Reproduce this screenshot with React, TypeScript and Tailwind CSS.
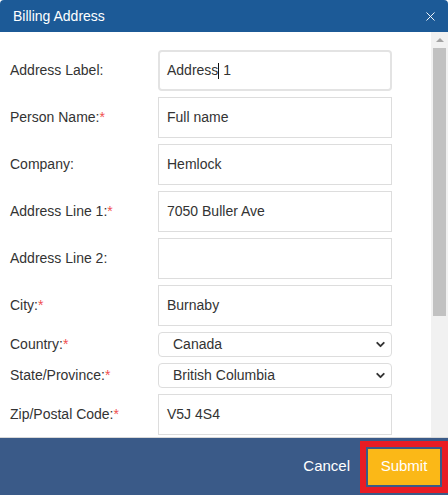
import { ChevronDown, X } from "lucide-react";

type Field = {
  label: string;
  value?: string;
  required?: boolean;
  kind?: "text" | "select" | "focus";
};

const fields: Field[] = [
  { label: "Address Label:", value: "Address 1", kind: "focus" },
  { label: "Person Name:", value: "Full name", required: true },
  { label: "Company:", value: "Hemlock" },
  { label: "Address Line 1:", value: "7050 Buller Ave", required: true },
  { label: "Address Line 2:", value: "" },
  { label: "City:", value: "Burnaby", required: true },
  { label: "Country:", value: "Canada", required: true, kind: "select" },
  { label: "State/Province:", value: "British Columbia", required: true, kind: "select" },
  { label: "Zip/Postal Code:", value: "V5J 4S4", required: true },
];

function Control({ f }: { f: Field }) {
  if (f.kind === "select") {
    return (
      <div className="w-[234px] h-[25px] border border-[#ddd] rounded-[4px] flex items-center justify-between pl-[14px] pr-[4px] text-[#333]">
        <span>{f.value}</span>
        <ChevronDown size={13} strokeWidth={3.5} className="text-[#333]" />
      </div>
    );
  }
  if (f.kind === "focus") {
    return (
      <div className="w-[234px] h-[41px] border-2 border-[#e3e3e3] rounded-[4px] flex items-center px-[7px] text-[#333]">
        <span>Address</span>
        <span className="inline-block w-px h-[16px] bg-[#111]" />
        <span>&nbsp;1</span>
      </div>
    );
  }
  return (
    <div className="w-[234px] h-[41px] border border-[#ddd] flex items-center px-[8px] text-[#333]">
      {f.value}
    </div>
  );
}

export default function App() {
  return (
    <div className="w-[448px] h-[495px] bg-white flex flex-col overflow-hidden text-[14px] font-['Liberation_Sans',Arial,sans-serif]">
      {/* Header */}
      <div className="h-[32px] shrink-0 bg-[#1c5a97] rounded-t-[4px] flex items-center justify-between pl-[13px] pr-[10px] text-white">
        <span className="text-[14px]">Billing Address</span>
        <X size={15} strokeWidth={1.5} />
      </div>

      {/* Body */}
      <div className="flex-1 flex min-h-0">
        <div className="flex-1 flex flex-col gap-[6px] pt-[18px] pl-[10px] overflow-hidden">
          {fields.map((f) => (
            <div key={f.label} className="flex items-center shrink-0">
              <div className="w-[148px] text-[#333]">
                {f.label}
                {f.required && <span className="text-[#f05050]">*</span>}
              </div>
              <Control f={f} />
            </div>
          ))}
        </div>
        {/* Scrollbar */}
        <div className="w-[17px] shrink-0 bg-[#f1f1f1] flex flex-col items-center">
          <div className="h-[16px] flex items-center justify-center">
            <div className="w-0 h-0 border-l-[4px] border-r-[4px] border-b-[4px] border-l-transparent border-r-transparent border-b-[#a3a3a3]" />
          </div>
          <div className="w-[13px] h-[268px] bg-[#c1c1c1]" />
        </div>
      </div>

      {/* Footer */}
      <div className="h-[58px] shrink-0 bg-[#3a5a88] border-t border-[#d8d8d8] flex items-center justify-end">
        <span className="text-white text-[15px] mr-[10px]">Cancel</span>
        <div className="border-[6px] border-[#e91c24] p-[2px]">
          <div className="w-[72px] h-[36px] bg-[#fbb817] text-white text-[15px] flex items-center justify-center">
            Submit
          </div>
        </div>
      </div>
    </div>
  );
}
